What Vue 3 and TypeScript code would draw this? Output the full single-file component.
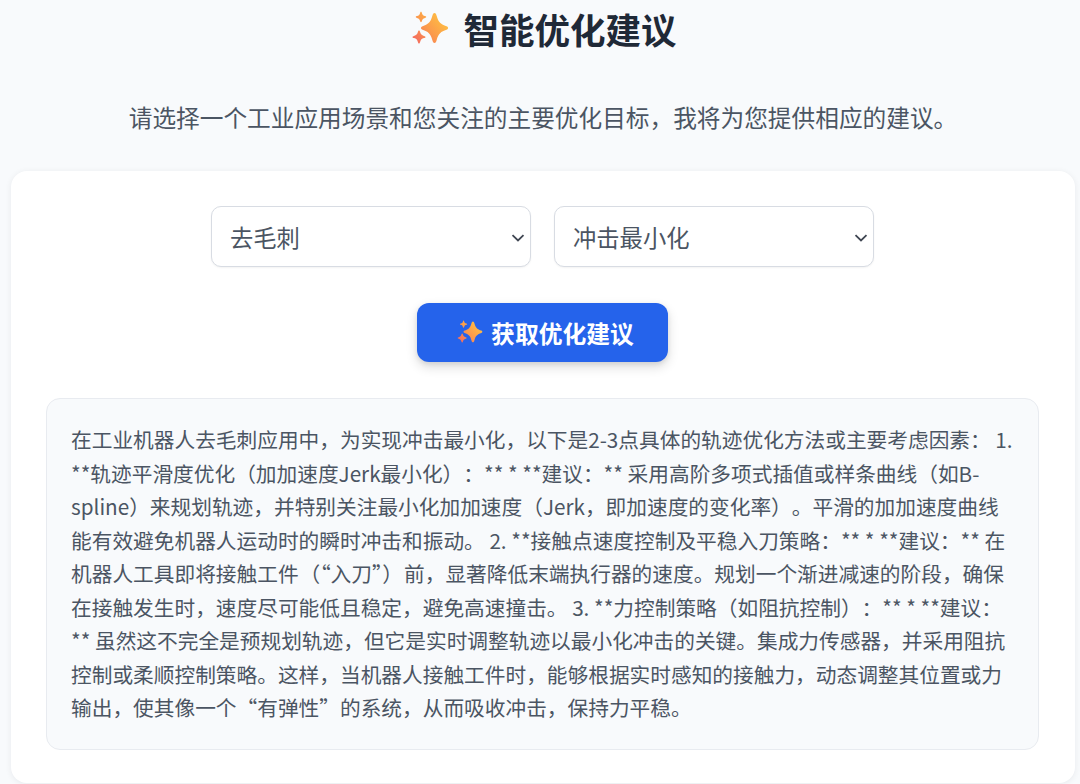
<template>
  <div class="page">
    <h1 class="title">
      <svg class="title-icon" viewBox="0 0 36 36" aria-hidden="true">
        <defs>
          <linearGradient id="spark" gradientUnits="userSpaceOnUse" x1="2" y1="32" x2="34" y2="4">
            <stop offset="0" stop-color="#f4695f" />
            <stop offset="0.45" stop-color="#fb9a4c" />
            <stop offset="1" stop-color="#ffc741" />
          </linearGradient>
        </defs>
        <path v-for="d in sparkle" :key="d" fill="url(#spark)" :d="d" />
      </svg>
      <span>智能优化建议</span>
    </h1>
    <p class="subtitle">请选择一个工业应用场景和您关注的主要优化目标，我将为您提供相应的建议。</p>

    <section class="card">
      <div class="selects">
        <div class="select-wrap">
          <select v-model="scene" class="select">
            <option v-for="s in scenes" :key="s">{{ s }}</option>
          </select>
          <svg class="chevron" viewBox="0 0 14 8" aria-hidden="true">
            <path d="M1.500 1.200 7 6.400l5.500-5.200" />
          </svg>
        </div>
        <div class="select-wrap">
          <select v-model="goal" class="select">
            <option v-for="g in goals" :key="g">{{ g }}</option>
          </select>
          <svg class="chevron" viewBox="0 0 14 8" aria-hidden="true">
            <path d="M1.500 1.200 7 6.400l5.500-5.200" />
          </svg>
        </div>
      </div>

      <div class="actions">
        <button class="btn" type="button">
          <svg class="btn-icon" viewBox="0 0 36 36" aria-hidden="true">
            <path v-for="d in sparkle" :key="d" fill="url(#spark)" :d="d" />
          </svg>
          <span>获取优化建议</span>
        </button>
      </div>

      <div class="result">{{ adviceStart }}<span class="tight">（“入刀”）</span>{{ adviceEnd }}</div>
    </section>
  </div>
</template>

<script setup lang="ts">
import { ref } from "vue";

const scenes = ["去毛刺", "焊接", "喷涂", "装配"];
const goals = ["冲击最小化", "时间最优", "能耗最低"];

const scene = ref(scenes[0]);
const goal = ref(goals[0]);

// one big four-point star and two small ones
const sparkle = [
  "M21.500 2C22.600 2 23.200 3 23.700 5C25.300 11 28 13.600 33.500 15.200C35.600 15.800 35.600 18.200 33.500 18.800C28 20.400 25.300 23 23.700 29C23.200 31 22.600 32 21.500 32C20.400 32 19.800 31 19.300 29C17.700 23 15 20.400 9.500 18.800C7.400 18.200 7.400 15.800 9.500 15.200C15 13.600 17.700 11 19.300 5C19.800 3 20.400 2 21.500 2Z",
  "M8 .8C8.500 .8 8.700 1.300 8.900 2C9.400 3.900 10.100 4.600 12 5.100C12.700 5.300 13.200 5.500 13.200 6C13.200 6.500 12.700 6.700 12 6.900C10.100 7.400 9.400 8.100 8.900 10C8.700 10.700 8.500 11.200 8 11.200C7.500 11.200 7.300 10.700 7.100 10C6.600 8.100 5.900 7.400 4 6.900C3.300 6.700 2.800 6.500 2.800 6C2.800 5.500 3.300 5.300 4 5.100C5.900 4.600 6.600 3.900 7.100 2C7.300 1.300 7.500 .8 8 .8Z",
  "M6 19.500C6.600 19.500 6.900 20.100 7.100 21C7.700 23.300 8.700 24.300 11 24.900C11.900 25.100 12.500 25.400 12.500 26C12.500 26.600 11.900 26.900 11 27.100C8.700 27.700 7.700 28.700 7.100 31C6.900 31.900 6.600 32.500 6 32.500C5.400 32.500 5.100 31.900 4.900 31C4.300 28.700 3.300 27.700 1 27.100C.1 26.900 -.5 26.600 -.5 26C-.5 25.400 .1 25.100 1 24.900C3.300 24.300 4.300 23.300 4.900 21C5.100 20.100 5.400 19.500 6 19.500Z",
];

const adviceStart =
  "在工业机器人去毛刺应用中，为实现冲击最小化，以下是2-3点具体的轨迹优化方法或主要考虑因素： 1. **轨迹平滑度优化（加加速度Jerk最小化）：** * **建议：** 采用高阶多项式插值或样条曲线（如B-spline）来规划轨迹，并特别关注最小化加加速度（Jerk，即加速度的变化率）。平滑的加加速度曲线能有效避免机器人运动时的瞬时冲击和振动。 2. **接触点速度控制及平稳入刀策略：** * **建议：** 在机器人工具即将接触工件";
const adviceEnd =
  "前，显著降低末端执行器的速度。规划一个渐进减速的阶段，确保在接触发生时，速度尽可能低且稳定，避免高速撞击。 3. **力控制策略（如阻抗控制）：** * **建议：** 虽然这不完全是预规划轨迹，但它是实时调整轨迹以最小化冲击的关键。集成力传感器，并采用阻抗控制或柔顺控制策略。这样，当机器人接触工件时，能够根据实时感知的接触力，动态调整其位置或力输出，使其像一个“有弹性”的系统，从而吸收冲击，保持力平稳。";
</script>

<style>
html,
body {
  background: #f8fafc;
}
</style>

<style scoped>
.page {
  height: 784px;
  overflow: hidden;
  box-sizing: border-box;
  padding: 0 5px 0 11px;
  font-family: "Noto Sans CJK SC", "Noto Sans", sans-serif;
  color: #4b5563;
}

.title {
  margin: 0;
  height: 57px;
  padding-left: 4px;
  display: flex;
  justify-content: center;
  align-items: center;
  gap: 14px;
  font-size: 35.5px;
  font-weight: 700;
  color: #1f2937;
}

.title-icon {
  flex: none;
  width: 36px;
  height: 36px;
  overflow: visible;
}

.subtitle {
  margin: 42px 0 36px;
  text-align: center;
  font-size: 23.68px;
  line-height: 36px;
}

.card {
  background: #fff;
  border-radius: 16px;
  padding: 35px 36px 35px 35px;
  height: 612px;
  box-sizing: border-box;
  box-shadow: 0 1px 6px rgba(15, 23, 42, 0.07);
}

.selects {
  display: flex;
  justify-content: center;
  gap: 23px;
}

.select-wrap {
  position: relative;
  width: 320px;
  height: 61px;
}

.select {
  appearance: none;
  width: 100%;
  height: 100%;
  box-sizing: border-box;
  padding: 0 18px;
  background-color: #fff;
  border: 1px solid #d8dce3;
  border-radius: 10px;
  box-shadow: 0 1px 2px rgba(0, 0, 0, 0.05);
  font-family: inherit;
  font-size: 23.3px;
  color: #4b5563;
}

.chevron {
  position: absolute;
  right: 6px;
  top: 28px;
  width: 14px;
  height: 8px;
  pointer-events: none;
}

.chevron path {
  fill: none;
  stroke: #3f4652;
  stroke-width: 1.800;
}

.actions {
  display: flex;
  justify-content: center;
  margin-top: 36px;
}

.btn {
  display: flex;
  align-items: center;
  justify-content: center;
  gap: 8px;
  width: 251px;
  height: 59px;
  padding: 0 0 0 7px;
  border: none;
  border-radius: 12px;
  background: #2563eb;
  color: #fff;
  font-family: inherit;
  font-size: 23.8px;
  font-weight: 700;
  box-shadow: 0 5px 12px rgba(0, 0, 0, 0.14), 0 2px 5px rgba(0, 0, 0, 0.08);
}

.btn-icon {
  flex: none;
  width: 25px;
  height: 25px;
  overflow: visible;
}

.result {
  margin-top: 36px;
  padding: 24px 20px 24px 24px;
  background: #f8fafc;
  border: 1px solid #e8ebf0;
  border-radius: 14px;
  font-size: 20.7px;
  line-height: 33.5px;
  text-spacing-trim: space-all;
  color: #4b5563;
}

.tight {
  margin: 0 1px;
  text-spacing-trim: normal;
}
</style>
